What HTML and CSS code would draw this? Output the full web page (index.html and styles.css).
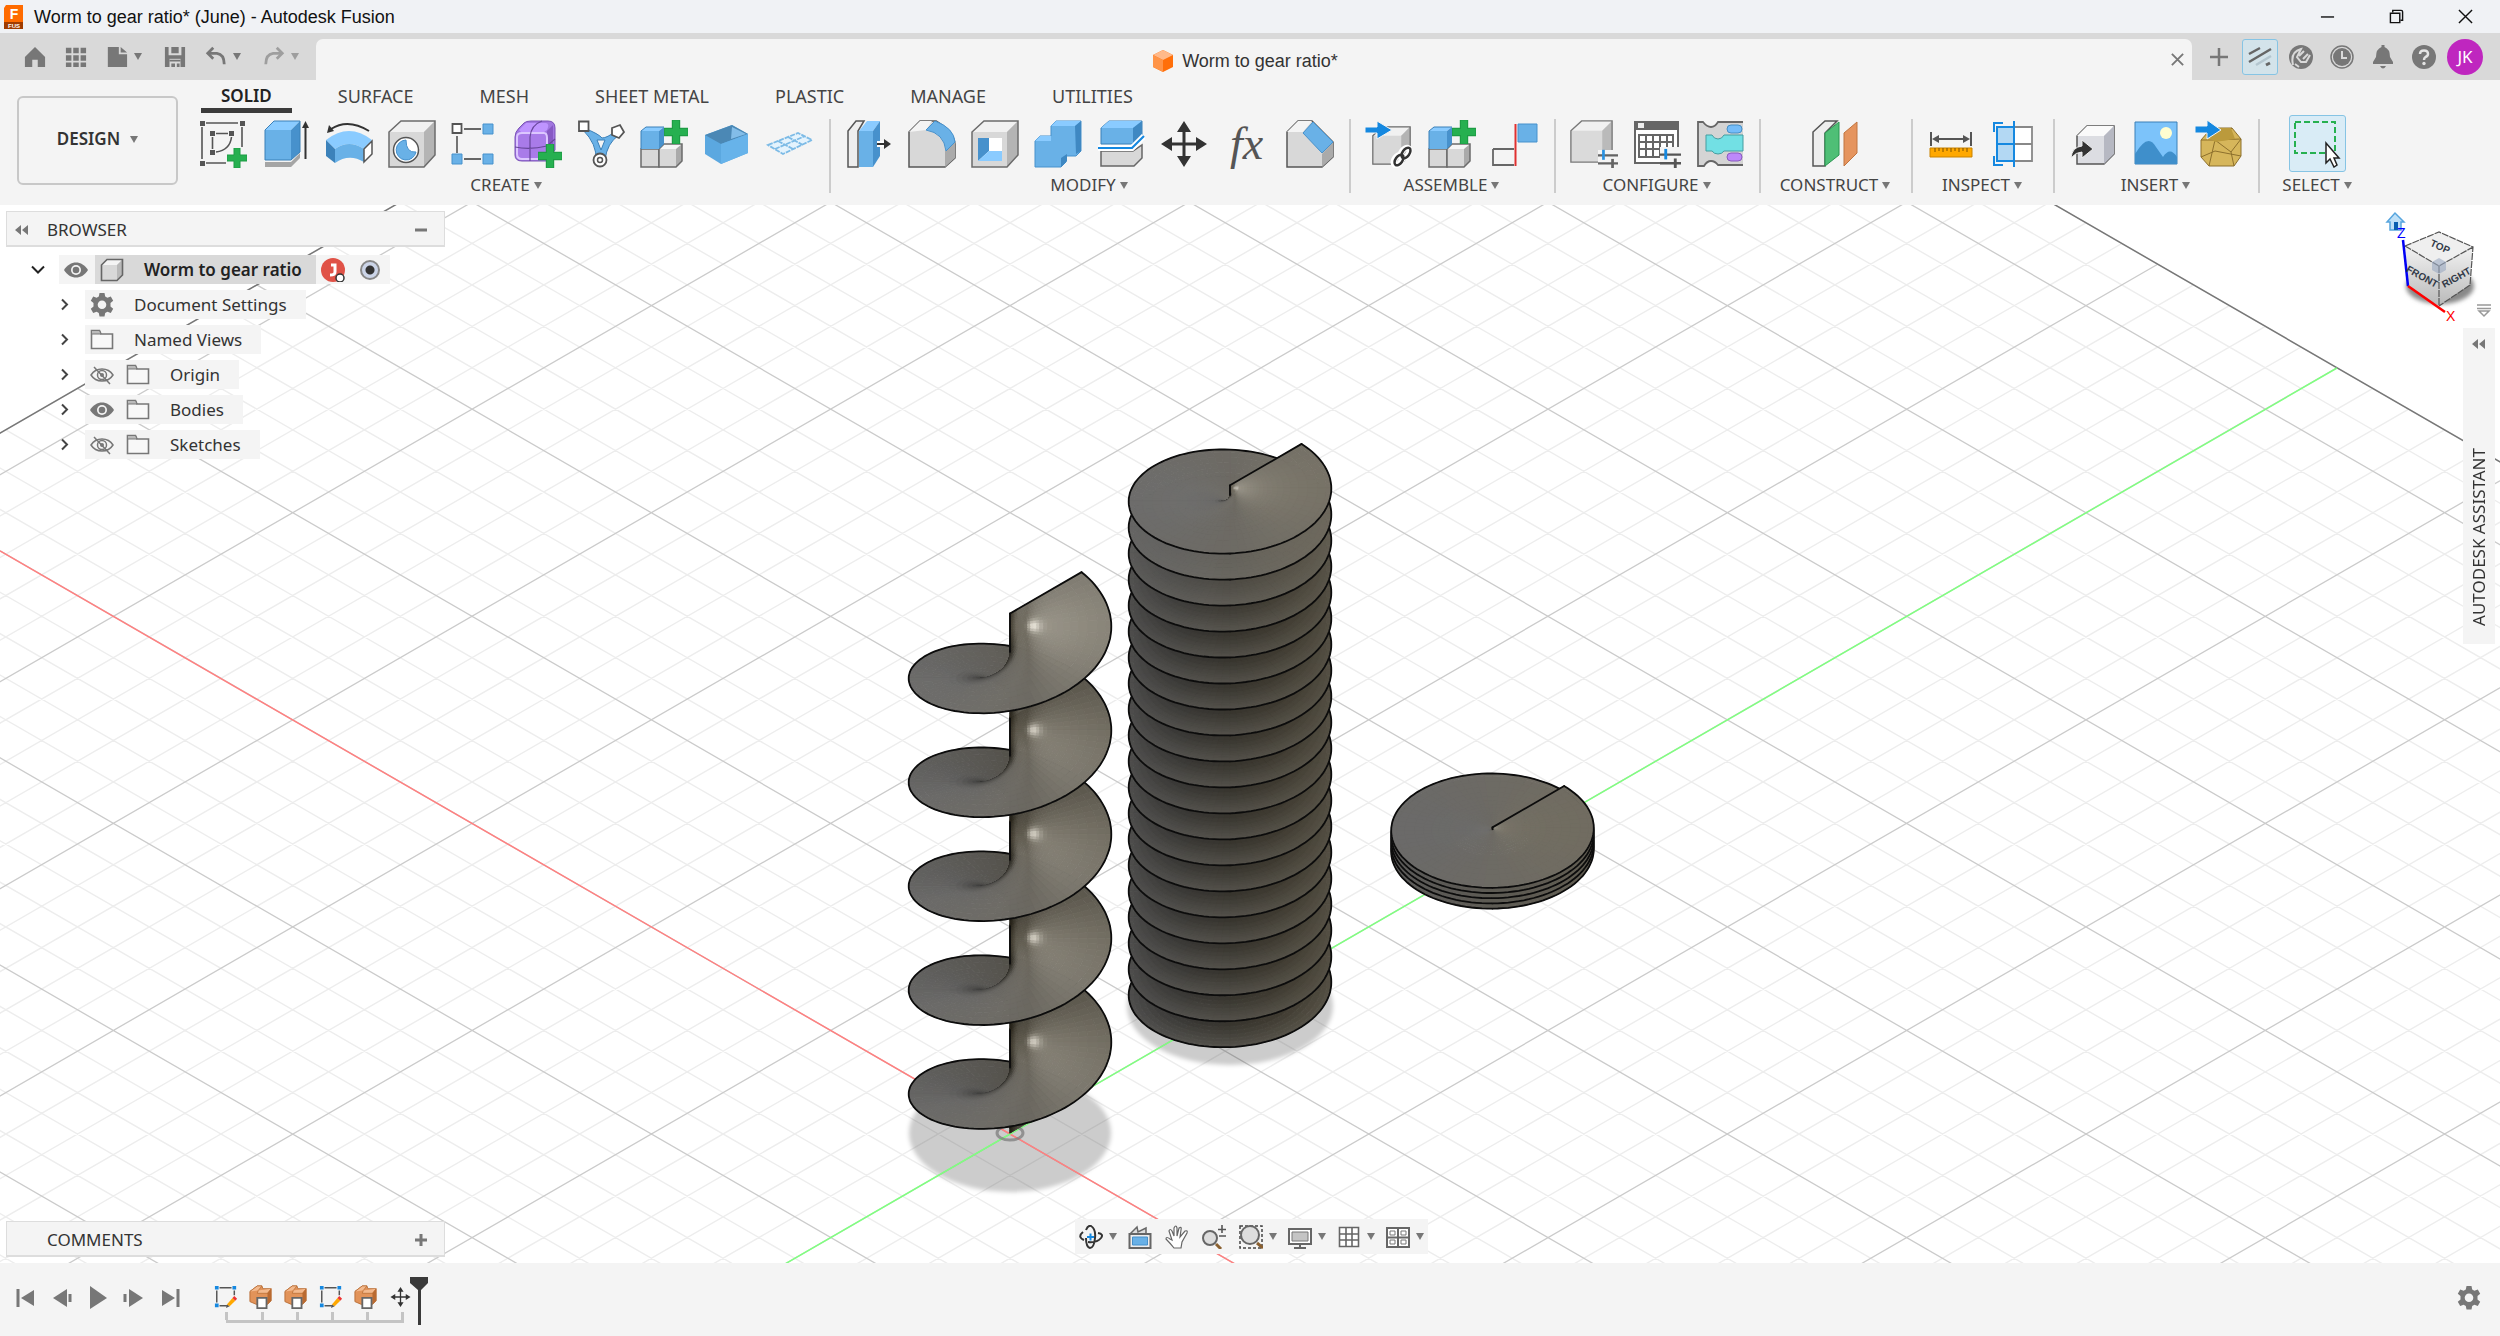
FILE: index.html
```html
<!DOCTYPE html>
<html lang="en">
<head>
<meta charset="utf-8">
<title>Worm to gear ratio* (June) - Autodesk Fusion</title>
<link rel="stylesheet" href="styles.css">
</head>
<body>
<svg class="defs" aria-hidden="true">
  <defs>
    <linearGradient id="gCube" x1="0" y1="0" x2="0" y2="1"><stop offset="0" stop-color="#f2f2f2"/><stop offset="1" stop-color="#b9b9b9"/></linearGradient>
    <symbol id="plus" viewBox="0 0 20 20"><path d="M7 0h6v7h7v6h-7v7h-6v-7h-7v-6h7z" fill="#26b050" stroke="#1d9c44"/></symbol>
    <symbol id="box" viewBox="0 0 48 48"><path d="M1 12 13 1H47V35L36 47H1z" fill="#d8d8d8"/><path d="M1 12 13 1H47L36 12z" fill="#f1f1f1"/><path d="M36 12 47 1V35L36 47z" fill="#b4b4b4"/><path d="M1 12 13 1H47V35L36 47H1z" fill="none" stroke="#6b6b6b" stroke-width="1.5"/></symbol>
    <symbol id="smallBox" viewBox="0 0 24 24"><path d="M1.500 7 7 1.500H22.500V17L17 22.500H1.500z" fill="#d8d8d8"/><path d="M1.500 7 7 1.500H22.500L17 7z" fill="#f4f4f4"/><path d="M17 7 22.500 1.500V17L17 22.500z" fill="#b9b9b9"/><path d="M1.500 7 7 1.500H22.500V17L17 22.500H1.500z" fill="none" stroke="#666" stroke-width="1.600"/></symbol>
    <symbol id="eye" viewBox="0 0 24 24"><path d="M0 12C6 2 18 2 24 12 18 22 6 22 0 12z" fill="#777"/><circle cx="12" cy="12" r="5" fill="#f4f4f4"/><circle cx="12" cy="12" r="3.300" fill="#777"/></symbol>
    <symbol id="eyeOff" viewBox="0 0 24 24"><path d="M1 12C6 4 18 4 23 12 18 20 6 20 1 12zM4 4 20 21" fill="none" stroke="#777" stroke-width="1.500"/><circle cx="12" cy="12" r="4.500" fill="none" stroke="#777" stroke-width="1.500"/><circle cx="12" cy="12" r="2" fill="#777"/></symbol>
    <symbol id="folder" viewBox="0 0 24 24"><path d="M1.500 20.500V2.500H9.500L11 6H22.500V20.500z" fill="#fff" fill-opacity=".4" stroke="#777" stroke-width="1.600"/><path d="M1.500 2.500H9.500L11 6H1.500z" fill="#bbb" stroke="#777"/></symbol>
    <symbol id="gear" viewBox="0 0 24 24"><path fill-rule="evenodd" d="M9.500 0h5l.7 3.500 2.200 1.200 3.400-1.200 2.400 4.200-2.700 2.300v3.500l2.700 2.300-2.400 4.200-3.400-1.200-2.200 1.200-.7 3.500h-5l-.7-3.500-2.200-1.200-3.400 1.200L.8 15.800l2.700-2.300V10L.8 7.700l2.400-4.200 3.400 1.200 2.200-1.200zM12 7.500a4.300 4.300 0 1 0 0 8.600 4.300 4.300 0 0 0 0-8.600z" fill="#777"/></symbol>
    <symbol id="chev" viewBox="0 0 16 16"><path d="M5 3 10 8 5 13" fill="none" stroke="#444" stroke-width="2"/></symbol>
    <symbol id="tlSketch" viewBox="0 0 26 26"><path d="M6 3H19M3 6V19M6 22.500H14M22 6V11" fill="none" stroke="#555" stroke-width="1.600"/><path d="M1 1h4v4H1zM20 1h4v4h-4zM1 20h4v4H1z" fill="#1588e0"/><path d="M14 21 20 14 23 17 17 23z" fill="#ffa800"/><path d="M20 14 22 12 25 15 23 17z" fill="#e33"/><path d="M14 21 17 23 13 25z" fill="#555"/></symbol>
    <symbol id="tlBody" viewBox="0 0 26 26"><path d="M1 7 9 1H14L15 4 24 4V17L20 21H8L1 18z" fill="#e29359" stroke="#b86c34"/><path d="M1 7 9 1H14L10 6 9 9 20 9 24 4" fill="#f3b98d" stroke="#b86c34" stroke-width=".8"/><path d="M20 9 24 4V17L20 21z" fill="#b96a31"/><path d="M9 14H19V25H9z" fill="#fff" stroke="#666" stroke-width="2"/></symbol>
    <symbol id="move" viewBox="0 0 48 48"><path d="M24 1 31 12H25.500V22.500H36V17L47 24 36 31V25.500H25.500V36H31L24 47 17 36H22.500V25.500H12V31L1 24 12 17V22.500H22.500V12H17z" fill="#333"/></symbol>
    <symbol id="newComp" viewBox="0 0 48 48"><path d="M1 29 H19V47H1z" fill="#d8d8d8" stroke="#6b6b6b" stroke-width="1.500"/><path d="M19 29 24 24H42L36 29z" fill="#f6f6f6"/><path d="M19 29H36V47H19z" fill="#d8d8d8"/><path d="M36 29 42 24V41L36 47z" fill="#aaa"/><path d="M19 29 24 24H42V41L36 47H19z" fill="none" stroke="#6b6b6b" stroke-width="1.500"/><path d="M1 11H19V29H1z" fill="#69b1e7"/><path d="M1 11 6 7H24L19 11z" fill="#8acbff"/><path d="M19 11 24 7V24L19 29z" fill="#4791cc"/><path d="M1 29V11L6 7H24" fill="none" stroke="#3a80b8"/><use href="#plus" x="24" y="0" width="24" height="24"/></symbol>
    <symbol id="sliders" viewBox="0 0 22 22"><path d="M0 8H22M0 17H22" stroke="#555" stroke-width="2.500"/><path d="M6 2V13" stroke="#1588e0" stroke-width="3"/><path d="M16 12V22" stroke="#555" stroke-width="3"/></symbol>
  </defs>
</svg>

<header class="titlebar">
  <svg class="app-logo" viewBox="0 0 22 26"><path d="M3 1H20V20H1V4z" fill="#ff6b00"/><path d="M1 18H20V25H1z" fill="#a03c00"/><text x="11" y="15" text-anchor="middle" class="logo-f">F</text><text x="11" y="24" text-anchor="middle" class="logo-s">FUS</text></svg>
  <h1 class="app-title">Worm to gear ratio* (June) - Autodesk Fusion</h1>
  <div class="window-buttons">
    <button aria-label="Minimize"><svg viewBox="0 0 16 16"><path d="M1 8.500H15" stroke="#111" stroke-width="1.500"/></svg></button>
    <button aria-label="Restore"><svg viewBox="0 0 16 16"><path d="M4 3.500V1.500H13Q14.500 1.500 14.500 3V12H12.500M1.500 4.500H11.500V14.500H1.500z" fill="none" stroke="#111" stroke-width="1.500"/></svg></button>
    <button aria-label="Close"><svg viewBox="0 0 16 16"><path d="M1 1 15 15M15 1 1 15" stroke="#111" stroke-width="1.500"/></svg></button>
  </div>
</header>

<div class="tabbar">
  <nav class="quick" aria-label="Quick access">
    <button aria-label="Home"><svg viewBox="0 0 24 24"><path d="M12 1 23 12V23H15V15H9V23H1V12z" fill="#777"/></svg></button>
    <button aria-label="Data panel"><svg viewBox="0 0 24 24"><path d="M1 2h6v6H1zM9 2h6v6H9zM17 2h6v6h-6zM1 10h6v6H1zM9 10h6v6H9zM17 10h6v6h-6zM1 18h6v5H1zM9 18h6v5H9zM17 18h6v5h-6z" fill="#777"/></svg></button>
    <button class="with-arrow" aria-label="File"><svg viewBox="0 0 24 24"><path d="M2 1H14V9H23V23H2zM16 1 23 7H16z" fill="#777"/></svg><i class="arrow"></i></button>
    <button aria-label="Save"><svg viewBox="0 0 24 24"><path d="M1 1H5V10H19V1H23V23H1zM8 1H16V8H8z" fill="#777"/><path d="M6 14H18V23H6z" fill="#d9d9d9"/><path d="M6 15H18V17H6zM8 19H12V23H8zM14 19H17V23H14z" fill="#777"/></svg></button>
    <button class="with-arrow" aria-label="Undo"><svg viewBox="0 0 24 24"><path d="M3 8H13Q21 9 21 20" fill="none" stroke="#777" stroke-width="3"/><path d="M9 2 3 8 9 14" fill="none" stroke="#777" stroke-width="3"/></svg><i class="arrow"></i></button>
    <button class="with-arrow faded" aria-label="Redo"><svg viewBox="0 0 24 24"><path d="M21 8H11Q3 9 3 20" fill="none" stroke="#777" stroke-width="3"/><path d="M15 2 21 8 15 14" fill="none" stroke="#777" stroke-width="3"/></svg><i class="arrow"></i></button>
  </nav>
  <div class="doc-tab">
    <div class="doc-name"><svg viewBox="0 0 22 24"><path d="M11 1 21 6V18L11 23 1 18V6z" fill="#ff6f0a"/><path d="M11 1 21 6 11 11 1 6z" fill="#ffb98a"/><path d="M1 6 11 11V23L1 18z" fill="#ff9447"/></svg><span>Worm to gear ratio*</span></div>
    <button class="tab-close" aria-label="Close tab"><svg viewBox="0 0 16 16"><path d="M2 2 14 14M14 2 2 14" stroke="#777" stroke-width="2"/></svg></button>
  </div>
  <div class="account">
    <button aria-label="New tab"><svg viewBox="0 0 24 24"><path d="M12 3V21M3 12H21" stroke="#777" stroke-width="2.500"/></svg></button>
    <button class="lit" aria-label="Assistant"><svg viewBox="0 0 24 24"><path d="M1 9 12 3M1 17 23 4" stroke="#666" stroke-width="2.500"/><path d="M8 20 23 11" stroke="#b4c6cf" stroke-width="2.500"/><path d="M18 20 22 18" stroke="#666" stroke-width="3"/></svg></button>
    <button aria-label="Extensions"><svg viewBox="0 0 24 24"><circle cx="12" cy="12" r="12" fill="#777"/><path d="M4 20Q1 7 12 4L8 12 12 17 17 17 21 10M10 11 15 6M14 14 19 9M6 19 10 22" fill="none" stroke="#d9d9d9" stroke-width="2"/></svg></button>
    <button aria-label="Job status"><svg viewBox="0 0 24 24"><circle cx="12" cy="12" r="11" fill="none" stroke="#777" stroke-width="1.500"/><circle cx="12" cy="12" r="9" fill="#777"/><path d="M12 6V13H17" fill="none" stroke="#d9d9d9" stroke-width="2"/></svg></button>
    <button aria-label="Notifications"><svg viewBox="0 0 24 24"><path d="M10.500 0H13.500V2Q19 4 19 12L22 17V19H2V17L5 12Q5 4 10.500 2zM9 21H15Q12 26 9 21z" fill="#777"/></svg></button>
    <button aria-label="Help"><svg viewBox="0 0 24 24"><circle cx="12" cy="12" r="12" fill="#777"/><path d="M8 9Q8 5.500 12 5.500T16 9Q16 11 13.500 12 12 13 12 15" fill="none" stroke="#e4e4e4" stroke-width="2.500"/><circle cx="12" cy="18.500" r="1.700" fill="#e4e4e4"/></svg></button>
    <button class="avatar" aria-label="Account">JK</button>
  </div>
</div>

<section class="ribbon">
  <button class="workspace">DESIGN <i class="arrow"></i></button>
  <div class="ribbon-main">
    <nav class="modes">
      <a href="#solid" class="on">SOLID</a><a href="#surface">SURFACE</a><a href="#mesh">MESH</a><a href="#sheet">SHEET METAL</a><a href="#plastic">PLASTIC</a><a href="#manage">MANAGE</a><a href="#utilities">UTILITIES</a>
    </nav>
    <div class="groups">
      <div class="group first">
        <div class="tools">
          <button aria-label="Create sketch"><svg viewBox="0 0 48 48"><path d="M7 3H39M3 7V39M43 7V27M7 43H27M17 13.500H29M13.500 17V29M17 32Q31 30 32.500 17" fill="none" stroke="#555" stroke-width="1.600"/><path d="M1 1h5v5H1zM41 1h5v5h-5zM1 41h5v5H1zM11 11h5v5h-5zM30 11h5v5h-5zM11 30h5v5h-5z" fill="#555"/><use href="#plus" x="28" y="28" width="20" height="20"/></svg></button>
          <button aria-label="Extrude"><svg viewBox="0 0 48 48"><path d="M3 42 H29L38 33V38L29 47H3z" fill="#a5a5a5"/><path d="M3 10H29V40H3z" fill="#69b1e7"/><path d="M3 10 12 1H38L29 10z" fill="#8acbff"/><path d="M29 10 38 1V32L29 40z" fill="#4791cc"/><path d="M3 40V10L12 1H38V32L29 40z" fill="none" stroke="#3a80b8"/><path d="M43.500 39V5" stroke="#333" stroke-width="2"/><path d="M40 8 43.500 1 47 8z" fill="#333"/></svg></button>
          <button aria-label="Revolve"><svg viewBox="0 0 48 48"><path d="M1 20Q24 2 47 20L39 29Q24 19 10 29z" fill="#8acbff"/><path d="M1 20 10 29V43L1 36z" fill="#3c82ba"/><path d="M10 29Q24 19 39 29V42Q24 33 10 43z" fill="#69b1e7"/><path d="M39 29 47 21V34L39 42z" fill="#fff" stroke="#555" stroke-width="1.500"/><path d="M6 9Q23-2 44 11" fill="none" stroke="#333" stroke-width="2"/><path d="M2 13 4 5 9 11z" fill="#333"/></svg></button>
          <button aria-label="Hole"><svg viewBox="0 0 48 48"><use href="#box"/><circle cx="18" cy="30" r="12.500" fill="#fff" stroke="#555" stroke-width="1.500"/><path d="M18 20A10 10 0 1 0 28 32Q18 33 18 20z" fill="#69b1e7" stroke="#4791cc"/></svg></button>
          <button aria-label="Pattern"><svg viewBox="0 0 48 48"><path d="M1.500 4H10.500V13H1.500z" fill="#fff" stroke="#555" stroke-width="1.800"/><path d="M13 9H30M6 16V33M13 39H30" stroke="#666" stroke-width="1.800"/><path d="M32 4h10v10H32zM1 34h10v10H1zM32 34h10v10H32z" fill="#69b1e7" stroke="#4791cc"/></svg></button>
          <button aria-label="Create form"><svg viewBox="0 0 48 48"><path d="M1 17Q1 12 5 8L10 3Q12 1 17 1H34Q41 1 41 8V30L33 41H8Q1 41 1 35z" fill="#a177e0" stroke="#7a52b8"/><path d="M5 10 12 3H32Q36 4 33 10Q30 13 26 13H8z" fill="#bf94ff"/><path d="M33 11 39 5V28L33 34z" fill="#8759c4"/><path d="M3 17Q3 13 8 13H30Q33 13 33 18V34Q33 39 28 39H8Q3 39 3 34z" fill="#a97be9" stroke="#dcc6ff" stroke-width="2"/><path d="M16 41V17Q17 5 28 1M1 27Q16 30 33 26L41 19" fill="none" stroke="#674699" stroke-width="1.200"/><use href="#plus" x="24" y="24" width="24" height="24"/></svg></button>
          <button aria-label="Configure structure"><svg viewBox="0 0 48 48"><path d="M7 8 Q22 14 25 18Q30 18 39 11L42 15Q30 23 28 40H19Q20 24 6 10z" fill="#69b1e7" stroke="#3a80b8"/><path d="M20 20H28L24 30z" fill="#f4f4f4" stroke="#3a80b8"/><path d="M2 1.500H11.500V11H2z" fill="#fff" stroke="#555" stroke-width="1.800"/><path d="M35 8 43 5 47 12 42 18 35 15z" fill="#fff" stroke="#555" stroke-width="1.800"/><circle cx="23" cy="40" r="6.500" fill="#fff" stroke="#555" stroke-width="1.800"/><circle cx="23" cy="40" r="2.500" fill="none" stroke="#555" stroke-width="1.500"/></svg></button>
          <button aria-label="New component"><svg viewBox="0 0 48 48"><use href="#newComp"/></svg></button>
          <button aria-label="Volume"><svg viewBox="0 0 48 48"><path d="M2 15 29 5 45 14V33L18 44 2 34z" fill="#5ba8e0"/><path d="M2 15 29 5 45 14 18 24z" fill="#4b88b5"/><path d="M29 7 43 14 28 19z" fill="#83bde8"/><path d="M18 24 45 14V33L18 44z" fill="#67b3ea"/></svg></button>
          <button aria-label="Grid"><svg viewBox="0 0 48 48"><path d="M2 25 32 13 46 20 17 34zM12 21 27 29M22 17 37 25M9 29 39 16" fill="#e4f3fd" stroke="#7dbbe6" stroke-width="1.800" stroke-dasharray="5 1"/></svg></button>
        </div>
        <button class="group-label">CREATE <i class="arrow"></i></button>
      </div>
      <div class="group">
        <div class="tools">
          <button aria-label="Press pull"><svg viewBox="0 0 48 48"><path d="M3 11 11 1H19L13 11V47H3z" fill="#eee" stroke="#555" stroke-width="1.500"/><path d="M14 11H28V47H14z" fill="#69b1e7"/><path d="M14 11 22 1H35L28 11z" fill="#8acbff"/><path d="M28 11 35 1V36L28 47z" fill="#4791cc"/><path d="M32 24H40" stroke="#fff" stroke-width="6"/><path d="M32 24H41" stroke="#333" stroke-width="2"/><path d="M39 19 46 24 39 29z" fill="#333"/></svg></button>
          <button aria-label="Fillet"><svg viewBox="0 0 48 48"><path d="M1 12 12 1H28Q46 12 47 24V38L37 47H1z" fill="#d8d8d8" stroke="#555" stroke-width="1.500"/><path d="M1 12 12 1H24L18 10z" fill="#f4f4f4"/><path d="M37 31 47 22V38L37 47z" fill="#aaa"/><path d="M18 10 27 1Q46 8 47 22L38 31Q36 13 18 10z" fill="#69b1e7" stroke="#4791cc"/></svg></button>
          <button aria-label="Shell"><svg viewBox="0 0 48 48"><use href="#box"/><path d="M7 18H31V41H7z" fill="#fff"/><path d="M7 18H18V31L7 41z" fill="#4791cc"/><path d="M7 41 18 31H31V41z" fill="#8acbff"/></svg></button>
          <button aria-label="Combine"><svg viewBox="0 0 48 48"><path d="M1 21 6 16H17V6L22 1H47V31L42 36H32V42L27 47H1z" fill="#69b1e7" stroke="#4791cc"/><path d="M17 6 22 1H47L41 6zM1 21 6 16H17V21z" fill="#8acbff"/><path d="M41 6 47 1V31L42 34zM27 38 33 34V41L27 47z" fill="#3f88c2"/></svg></button>
          <button aria-label="Split body"><svg viewBox="0 0 48 48"><path d="M4 8 12 1H45V16L35 24H4z" fill="#69b1e7" stroke="#3a80b8"/><path d="M4 8 12 1H45L36 8z" fill="#8acbff"/><path d="M36 8 45 1V16L36 24z" fill="#3f88c2"/><path d="M4 31H36L45 25V38L37 46H4z" fill="#d8d8d8" stroke="#666" stroke-width="1.500"/><path d="M1 28H35L47 16" fill="none" stroke="#fff" stroke-width="6"/><path d="M1 28H35L47 16" fill="none" stroke="#1588e0" stroke-width="2.200"/></svg></button>
          <button aria-label="Move"><svg viewBox="0 0 48 48"><use href="#move"/></svg></button>
          <button class="fx" aria-label="Parameters">fx</button>
          <button aria-label="Chamfer"><svg viewBox="0 0 48 48"><path d="M1 12 12 1H26L47 22V37L36 47H1z" fill="#d8d8d8" stroke="#555" stroke-width="1.500"/><path d="M1 12 12 1H26L17 12z" fill="#f4f4f4"/><path d="M36 34 47 22V37L36 47z" fill="#aaa"/><path d="M17 13 27 2 47 22 36 33z" fill="#69b1e7" stroke="#4791cc"/></svg></button>
        </div>
        <button class="group-label">MODIFY <i class="arrow"></i></button>
      </div>
      <div class="group">
        <div class="tools">
          <button aria-label="Insert component"><svg viewBox="0 0 48 48"><use href="#box" x="7" y="6" width="39" height="39"/><path d="M0 7H12V1L27 10 12 19V13H0z" fill="#1588e0" stroke="#f4f4f4"/><g fill="none" stroke="#fff" stroke-width="6"><ellipse cx="40" cy="33" rx="3.500" ry="6" transform="rotate(35 40 33)"/><ellipse cx="33" cy="40" rx="3.500" ry="6" transform="rotate(35 33 40)"/></g><g fill="none" stroke="#333" stroke-width="2.500"><ellipse cx="41" cy="33" rx="3.500" ry="6" transform="rotate(35 41 33)"/><ellipse cx="34" cy="40" rx="3.500" ry="6" transform="rotate(35 34 40)"/></g></svg></button>
          <button aria-label="New component"><svg viewBox="0 0 48 48"><use href="#newComp"/></svg></button>
          <button aria-label="Joint"><svg viewBox="0 0 48 48"><path d="M2 29H23M2 29V45H23" fill="#f4f4f4" stroke="#666" stroke-width="1.800"/><path d="M27 4H46V22H27z" fill="#69b1e7" stroke="#4791cc"/><path d="M24.500 4V46" stroke="#e03030" stroke-width="2"/></svg></button>
        </div>
        <button class="group-label">ASSEMBLE <i class="arrow"></i></button>
      </div>
      <div class="group">
        <div class="tools">
          <button aria-label="Configure"><svg viewBox="0 0 48 48" opacity=".9"><use href="#box" width="43" height="43"/><path d="M28 30H48V48H28z" fill="#f4f4f4"/><use href="#sliders" x="28" y="28" width="20" height="20"/></svg></button>
          <button aria-label="Configuration table"><svg viewBox="0 0 48 48"><path d="M2 2H45V43H2z" fill="#fff" stroke="#666" stroke-width="2"/><path d="M2 1H46V10H2z" fill="#666"/><path d="M5 3h6v5H5z" fill="#eee"/><path d="M6 15H40V37H6zM13 15V37M20 15V37M27 15V37M34 15V37M6 22H40M6 29H40" fill="none" stroke="#666" stroke-width="2"/><path d="M27 27H48V48H27z" fill="#f4f4f4"/><use href="#sliders" x="27" y="27" width="21" height="21"/></svg></button>
          <button aria-label="Configuration rules"><svg viewBox="0 0 48 48"><path d="M2 2H7Q10 7 15 7T22 2H47V45H22Q19 41 15 41T8 46H2z" fill="#d4d4d4"/><path d="M47 2H22Q19 7 15 7T7 2H2V46H8Q11 41 15 41T22 45H47" fill="none" stroke="#666" stroke-width="1.800"/><path d="M10 15H16Q18 19 22 19T28 15H47V31H28Q26 34 22 34T16 31H10z" fill="#72e0e4" stroke="#459da0"/><rect x="31" y="5" width="15" height="8" rx="4" fill="#74bdfa" stroke="#468fc4"/><rect x="31" y="33" width="15" height="8" rx="4" fill="#bd88fa" stroke="#895bc0"/></svg></button>
        </div>
        <button class="group-label">CONFIGURE <i class="arrow"></i></button>
      </div>
      <div class="group wide">
        <div class="tools">
          <button aria-label="Plane"><svg viewBox="0 0 48 48"><path d="M2 12 14 1H26L14 13V46H2z" fill="#eee" stroke="#555" stroke-width="1.500"/><path d="M14 13 28 2V35L14 46z" fill="#4fbf76" stroke="#299650"/><path d="M33 13 46 2V33L33 46z" fill="#e5945e" stroke="#c07440"/></svg></button>
        </div>
        <button class="group-label">CONSTRUCT <i class="arrow"></i></button>
      </div>
      <div class="group">
        <div class="tools">
          <button aria-label="Measure"><svg viewBox="0 0 48 48"><path d="M4 12V26M44 12V26M7 19H41" stroke="#555" stroke-width="2"/><path d="M5 19 12 15V23zM43 19 36 15V23z" fill="#555"/><path d="M3 28H45V37H3z" fill="#ffa800" stroke="#c98300"/><path d="M8 28V32M12 28V31M16 28V32M20 28V31M24 28V32M28 28V31M32 28V32M36 28V31M40 28V32" stroke="#7c5100"/></svg></button>
          <button aria-label="Section analysis"><svg viewBox="0 0 48 48"><path d="M7 7H24V41H7z" fill="#b3d8f3" stroke="#1588e0" stroke-width="2"/><path d="M24 7H42V41H24M24 24H42" fill="#fff" stroke="#888" stroke-width="1.800"/><path d="M7 24H24M24 1V47M13 3H4V12M13 45H4V36" fill="none" stroke="#1588e0" stroke-width="2"/></svg></button>
        </div>
        <button class="group-label">INSPECT <i class="arrow"></i></button>
      </div>
      <div class="group">
        <div class="tools">
          <button aria-label="Insert derive"><svg viewBox="0 0 48 48"><path d="M8 16 18 6H45V34L35 44H8z" fill="#dcdde2" stroke="#555" stroke-width="1.500"/><path d="M8 16 18 6H45L35 16z" fill="#fafafa"/><path d="M35 16 45 6V34L35 44z" fill="#b6b8c2"/><path d="M2 38Q3 27 13 26V20L24 29 13 38V32Q7 32 2 38z" fill="#333" stroke="#eee"/></svg></button>
          <button aria-label="Insert image"><svg viewBox="0 0 48 48"><path d="M3 2H45V44H3z" fill="#7cc3fa" stroke="#3a80b8"/><circle cx="34" cy="13" r="6" fill="#fffed0"/><path d="M3 34Q16 12 24 27L31 37Q38 26 45 37V44H3z" fill="#3f8fcb"/></svg></button>
          <button aria-label="Insert mesh"><svg viewBox="0 0 48 48"><path d="M6 20 13 12 22 8H37L46 19V36L39 46H14L6 37z" fill="#d6b65b" stroke="#8d702c"/><path d="M6 20H20L46 19M20 20 14 46M20 20 36 32 46 19M36 32 39 46M6 37 20 31 46 36M22 8 20 20 37 8" fill="none" stroke="#8d702c"/><path d="M10 15 22 8H36L40 19 20 22z" fill="#bb9a3c"/><path d="M0 6H12V0L26 10 12 19V13H0z" fill="#1588e0" stroke="#f4f4f4"/></svg></button>
        </div>
        <button class="group-label">INSERT <i class="arrow"></i></button>
      </div>
      <div class="group narrow">
        <div class="tools">
          <button class="lit" aria-label="Select"><svg viewBox="0 0 48 48"><path d="M2 2H42V33H2z" fill="none" stroke="#26b050" stroke-width="2" stroke-dasharray="6 3"/><path d="M33 23V43L37 39 41 47 44 45 41 38 46 38z" fill="#fff" stroke="#222" stroke-width="1.500"/></svg></button>
        </div>
        <button class="group-label">SELECT <i class="arrow"></i></button>
      </div>
    </div>
  </div>
</section>

<main class="viewport">
  <svg class="scene" viewBox="0 205 2500 1058" preserveAspectRatio="xMidYMid slice">
    <defs><filter id="soft"><feGaussianBlur stdDeviation="2"/></filter></defs>
    <g id="grid" fill="none"></g>
    <g fill="#000" fill-opacity=".2" filter="url(#soft)"><ellipse cx="1010" cy="1133" rx="101" ry="59"/><ellipse cx="1230" cy="1006" rx="103" ry="59"/></g>
    <path d="M0 551 1010 1134 1235 1264" fill="none" stroke="#ff8080" stroke-width="1.500"/>
    <path d="M785 1264 1010 1134 2337 368" fill="none" stroke="#80ff80" stroke-width="1.500"/>
    <ellipse cx="1010" cy="1133" rx="13" ry="7" fill="none" stroke="#777" stroke-opacity=".7" stroke-width="3"/>
    <g id="bodies" stroke-linecap="round"></g>
  </svg>

  <aside class="side">
    <section>
      <header class="panel-head"><button aria-label="Collapse"><svg viewBox="0 0 16 16"><path d="M7 3V13L1 8zM14 3V13L8 8z" fill="#777"/></svg></button><h2>BROWSER</h2><button aria-label="Minimize browser"><svg viewBox="0 0 16 16"><path d="M2 8H14" stroke="#777" stroke-width="3"/></svg></button></header>
      <ul class="tree">
        <li class="root"><svg class="twist" viewBox="0 0 16 16"><path d="M2 5 8 11 14 5" fill="none" stroke="#222" stroke-width="2"/></svg><span class="cell watch"><svg><use href="#eye"/></svg></span><span class="cell chosen"><svg><use href="#smallBox"/></svg><b>Worm to gear ratio</b></span><span class="cell badges"><svg viewBox="0 0 24 24"><circle cx="12" cy="12" r="12" fill="#e05247"/><path d="M10 7H14V14Q14 17 9 17" fill="none" stroke="#fff" stroke-width="3"/><circle cx="19" cy="20" r="4" fill="#fff" stroke="#333" stroke-width="1.500"/></svg><input type="radio" checked aria-label="Activate component"></span></li>
        <li><svg class="twist"><use href="#chev"/></svg><span class="cell"><svg><use href="#gear"/></svg><span>Document Settings</span></span></li>
        <li><svg class="twist"><use href="#chev"/></svg><span class="cell"><svg><use href="#folder"/></svg><span>Named Views</span></span></li>
        <li><svg class="twist"><use href="#chev"/></svg><span class="cell"><svg><use href="#eyeOff"/></svg><svg><use href="#folder"/></svg><span>Origin</span></span></li>
        <li><svg class="twist"><use href="#chev"/></svg><span class="cell"><svg><use href="#eye"/></svg><svg><use href="#folder"/></svg><span>Bodies</span></span></li>
        <li><svg class="twist"><use href="#chev"/></svg><span class="cell"><svg><use href="#eyeOff"/></svg><svg><use href="#folder"/></svg><span>Sketches</span></span></li>
      </ul>
    </section>
    <section>
      <header class="panel-head"><span class="blank"></span><h2>COMMENTS</h2><button aria-label="Add comment"><svg viewBox="0 0 16 16"><path d="M2 8H14M8 2V14" stroke="#777" stroke-width="3"/></svg></button></header>
    </section>
  </aside>

  <div class="navbar">
    <button aria-label="Orbit"><svg viewBox="0 0 24 24"><path d="M7 5Q9 0 12 1 17 4 16 13 15 23 11 23 7 22 7 13M4 7Q-2 12 5 15M9 17Q18 18 22 13 25 9 19 8" fill="none" stroke="#333" stroke-width="2"/><path d="M8 12H15M11.500 8.500V15.500" stroke="#1588e0" stroke-width="2"/></svg></button><i class="arrow"></i>
    <button aria-label="Look at"><svg viewBox="0 0 24 24"><path d="M2 9 9 2 10 7 18 3V9" fill="#ddd" stroke="#666" stroke-width="1.500"/><path d="M1.500 9H22.500V23H1.500z" fill="#eee" stroke="#666" stroke-width="2"/><path d="M4.500 12H19.500V20H4.500z" fill="#69b1e7" stroke="#4791cc"/></svg></button>
    <button aria-label="Pan"><svg viewBox="0 0 24 24"><path d="M9 23Q5 18 1 14 1 11 5 14L7 15 4 6Q5 3 7 6L9 11V3Q11-1 12 3V11L14 3Q17 1 16 5L15 12 20 6Q23 5 22 8L17 17 16 23z" fill="#fff" stroke="#666" stroke-width="1.200"/></svg></button>
    <button aria-label="Zoom"><svg viewBox="0 0 24 24"><circle cx="8" cy="13" r="7" fill="#ddd" stroke="#666" stroke-width="2"/><path d="M14 19 19 24" stroke="#8a6030" stroke-width="3"/><path d="M16 4.500H24M20 0V8M17 11H24" stroke="#555" stroke-width="1.600"/></svg></button>
    <button aria-label="Fit"><svg viewBox="0 0 24 24"><path d="M1 1H23V23H1z" fill="none" stroke="#444" stroke-width="1.500" stroke-dasharray="3 2"/><circle cx="11" cy="10" r="9" fill="#ddd" stroke="#666" stroke-width="2"/><path d="M18 18 24 23" stroke="#8a6030" stroke-width="3"/></svg></button><i class="arrow"></i>
    <button aria-label="Display settings"><svg viewBox="0 0 24 24"><path d="M1 4H23V19H1z" fill="#fff" stroke="#666" stroke-width="2"/><path d="M4 7H20V16H4z" fill="#c4c4c4" stroke="#777"/><path d="M12 19V22M6 23H18" stroke="#666" stroke-width="2"/></svg></button><i class="arrow"></i>
    <button aria-label="Grid settings"><svg viewBox="0 0 24 24"><path d="M2.500 2.500H21.500V21.500H2.500zM9 2.500V21.500M15 2.500V21.500M2.500 9H21.500M2.500 15H21.500" fill="#fff" stroke="#666" stroke-width="1.600"/></svg></button><i class="arrow"></i>
    <button aria-label="Viewports"><svg viewBox="0 0 24 24"><path d="M1 3H23V22H1zM12 3V22M1 12.500H23" fill="#fff" stroke="#666" stroke-width="2"/><path d="M4 6H9V10H4zM15 6H20V10H15zM4 15H9V19H4zM15 15H20V19H15z" fill="none" stroke="#777"/></svg></button><i class="arrow"></i>
  </div>

  <svg class="cube" viewBox="0 5 120 120">
    <g filter="url(#soft)"><ellipse cx="60" cy="86" rx="34" ry="18" fill="#888"/></g>
    <path d="M7 22 15 13 24 22H21V30H10V22z" fill="#bfe0f7" stroke="#57a5de" stroke-width="1.500"/><path d="M14 22H18V30H14z" fill="#0a5fb0"/>
    <path d="M25 46 59 66V106L28 86z" fill="url(#gCube)"/><path d="M59 66 93 47 90 85 59 106z" fill="url(#gCube)"/><path d="M25 46 59 32 93 47 59 66z" fill="#efefef"/>
    <path d="M25 46 59 32 93 47 90 85 59 106M25 46 59 66 93 47M59 66V106" fill="none" stroke="#555" stroke-width="1.200" stroke-dasharray="7 1"/>
    <path d="M52 62 59 58 66 62V70L59 74 52 70z" fill="#9aa9c2" fill-opacity=".6"/>
    <path d="M23 40 28 86" stroke="#0000f5" stroke-width="2.500"/><path d="M28 86 65 112" stroke="#f00" stroke-width="2.500"/>
    <text class="cube-text" x="60" y="50" text-anchor="middle" transform="rotate(24 60 47)">TOP</text>
    <text class="cube-text" x="42" y="80" text-anchor="middle" transform="rotate(29 42 77)">FRONT</text>
    <text class="cube-text" x="76" y="81" text-anchor="middle" transform="rotate(-29 76 77)">RIGHT</text>
    <text class="axis z" x="17" y="38">Z</text><text class="axis x" x="66" y="121">X</text>
  </svg>
  <svg class="cube-menu" viewBox="0 0 16 16"><path d="M1 2H15M1 5.500H15M3 8 8 13 13 8z" fill="none" stroke="#999" stroke-width="1.500"/></svg>
  <button class="assistant"><svg viewBox="0 0 16 16"><path d="M7 3V13L1 8zM14 3V13L8 8z" fill="#777"/></svg><span>AUTODESK ASSISTANT</span></button>
</main>

<footer class="timeline">
  <div class="playback">
    <button aria-label="To start"><svg viewBox="0 0 24 24"><path d="M4 3V21" stroke="#777" stroke-width="3"/><path d="M20 4V20L7 12z" fill="#777"/></svg></button>
    <button aria-label="Step back"><svg viewBox="0 0 24 24"><path d="M17 3V21L3 12z" fill="#777"/><path d="M20 8V16" stroke="#777" stroke-width="3"/></svg></button>
    <button aria-label="Play"><svg viewBox="0 0 24 24"><path d="M4 0V23L21 12z" fill="#777"/></svg></button>
    <button aria-label="Step forward"><svg viewBox="0 0 24 24"><path d="M7 3V21L21 12z" fill="#777"/><path d="M3 8V16" stroke="#777" stroke-width="3"/></svg></button>
    <button aria-label="To end"><svg viewBox="0 0 24 24"><path d="M20 3V21" stroke="#777" stroke-width="3"/><path d="M4 4V20L17 12z" fill="#777"/></svg></button>
  </div>
  <ol class="features">
    <li><svg><use href="#tlSketch"/></svg></li><li><svg><use href="#tlBody"/></svg></li><li><svg><use href="#tlBody"/></svg></li><li><svg><use href="#tlSketch"/></svg></li><li><svg><use href="#tlBody"/></svg></li><li><svg><use href="#move"/></svg></li>
  </ol>
  <svg class="marker" viewBox="0 0 18 48"><path d="M0 0H18V6L11 13V48H8V13L0 6z" fill="#3a3a3a"/></svg>
  <button class="settings" aria-label="Timeline settings"><svg><use href="#gear"/></svg></button>
</footer>
<script src="viewport.js"></script>
</body>
</html>
```
FILE: styles.css
```css
* { box-sizing: border-box; }
body {
  margin: 0;
  min-height: 100vh;
  display: flex;
  flex-direction: column;
  background: #fff;
  color: #333;
  font: 18px/26px "Noto Sans", "Open Sans", sans-serif;
}
button { border: 0; padding: 0; background: none; color: inherit; font: inherit; display: flex; align-items: center; justify-content: center; }
h1, h2 { margin: 0; font-weight: 400; }
ul, ol { margin: 0; padding: 0; list-style: none; }
svg { display: block; flex: none; }
.defs { position: absolute; width: 0; height: 0; }
.arrow { width: 0; height: 0; border: 4px solid transparent; border-top: 7px solid #777; border-bottom: 0; flex: none; }

.titlebar { height: 33px; display: flex; align-items: center; background: #f0f2f5; padding-left: 3px; }
.app-logo { width: 22px; height: 26px; }
.logo-f { font: bold 14px "Liberation Sans", sans-serif; fill: #fff; }
.logo-s { font: bold 6px "Liberation Sans", sans-serif; fill: #fff; }
.app-title { font: 18px/26px "Liberation Sans", Arial, sans-serif; color: #111; margin-left: 9px; flex: 1; }
.window-buttons { display: flex; }
.window-buttons button { width: 69px; height: 33px; }
.window-buttons svg { width: 15px; height: 15px; }

.tabbar { height: 47px; display: flex; background: #d9d9d9; padding-right: 17px; }
.quick { width: 316px; display: flex; align-items: center; padding-left: 15px; }
.quick button { width: 41px; justify-content: flex-start; padding-left: 9px; gap: 6px; }
.quick button.with-arrow { width: 58px; }
.quick svg { width: 22px; height: 22px; }
.faded { opacity: .6; }
.doc-tab { flex: 1; margin-top: 6px; background: #f4f4f4; border-radius: 7px 7px 0 0; display: flex; align-items: center; padding-right: 6px; }
.doc-name { flex: 1; display: flex; justify-content: center; align-items: center; gap: 8px; padding: 2px 0 0 6px; font: 18px/26px "Liberation Sans", Arial, sans-serif; }
.doc-name svg { width: 22px; height: 24px; }
.tab-close { width: 18px; height: 41px; }
.tab-close svg { width: 15px; height: 15px; }
.account { display: flex; align-items: center; gap: 5px; padding-left: 9px; }
.account button { width: 36px; height: 36px; }
.account svg { width: 24px; height: 24px; }
.lit { background: #d9ecf6; border: 1px solid #86c4e4; border-radius: 3px; }
.account .lit { background: #d3e3ea; }
.account .avatar { background: #bf26bf; color: #fff; border-radius: 50%; font-size: 17px; }

.ribbon { min-height: 125px; display: flex; background: #f4f4f4; padding-left: 17px; }
.workspace { width: 161px; height: 89px; margin-top: 16px; border: 2px solid #c8c8c8; border-radius: 6px; font-weight: 600; font-size: 17px; gap: 10px; padding-bottom: 3px; }
.ribbon-main { flex: 1; padding-left: 5px; }
.modes { display: flex; gap: 26px; padding-left: 18px; }
.modes a { height: 33px; padding: 3px 20px 0; color: #444; font-size: 18px; text-decoration: none; border-bottom: 5px solid transparent; }
.modes .on { font-weight: 600; font-size: 17px; border-color: #3b3b3b; color: #222; }
.groups { display: flex; padding-top: 2px; }
.group { padding: 0 8px; display: flex; flex-direction: column; align-items: center; background: linear-gradient(#ccc, #ccc) left 4px / 2px 74px no-repeat; height: 83px; }
.group.first { background: none; }
.group.wide { min-width: 152px; }
.group.narrow { min-width: 118px; }
.tools { display: flex; height: 57px; }
.tools button { width: 63px; height: 57px; }
.tools .lit { width: 57px; }
.tools svg { width: 48px; height: 48px; }
.group-label { font-size: 17px; height: 26px; gap: 4px; color: #444; }
.fx { font: italic 46px/48px "Liberation Serif", serif; color: #555; }

.viewport { flex: 1; position: relative; overflow: hidden; background: #fff; }
.scene { position: absolute; inset: 0; width: 100%; height: 100%; }
.side { position: absolute; left: 6px; top: 6px; bottom: 6px; width: 439px; display: flex; flex-direction: column; justify-content: space-between; }
.panel-head { height: 36px; display: flex; align-items: center; background: #f4f4f4; border: 1px solid #ddd; border-bottom: 2px solid #ddd; padding: 2px 15px 0 7px; }
.panel-head h2 { flex: 1; font-size: 17px; margin-left: 17px; }
.panel-head svg, .blank { width: 16px; height: 16px; }
.tree { padding: 8px 0 0 15px; }
.tree li { height: 35px; display: flex; align-items: flex-start; padding-left: 36px; }
.tree .root { padding-left: 0; }
.twist { width: 16px; height: 29px; margin-right: 12px; }
.root .twist { margin: 0 13px 0 9px; }
.cell { height: 29px; display: flex; align-items: center; background: #f4f4f4; padding-left: 5px; }
.tree .cell svg { width: 24px; height: 24px; margin-right: 12px; }
.cell > span { padding: 0 19px 0 8px; font-size: 17px; }
.cell b { font-size: 17px; font-weight: 600; color: #222; padding: 0 14px 0 8px; }
.cell.chosen { background: #d9d9d9; }
.root .watch svg { margin-right: 7px; }
.badges { padding-right: 10px; }
.badges input { appearance: none; width: 20px; height: 20px; margin: 0 0 0 3px; border: 2px solid #888; border-radius: 50%; background: radial-gradient(circle, #333 0 4px, #ccd5e8 5px); }

.navbar { position: absolute; left: 43%; bottom: 9px; height: 35px; display: flex; align-items: center; gap: 9px; background: #f4f4f4; padding: 0 4px 0 2px; }
.navbar button { width: 24px; height: 24px; margin: 0 2px; }
.navbar svg { width: 24px; height: 24px; }
.navbar .arrow { margin-left: -5px; }

.cube { position: absolute; right: 0; top: 0; width: 120px; height: 120px; }
.cube-text { font: bold 10px "Liberation Sans", sans-serif; fill: #333b48; }
.axis { font: 14px "Liberation Sans", sans-serif; }
.axis.z { fill: #00f; }
.axis.x { fill: #f00; }
.cube-menu { position: absolute; right: 8px; top: 98px; width: 16px; height: 16px; }
.assistant { position: absolute; right: 5px; top: 123px; width: 32px; height: 316px; background: #f4f4f4; flex-direction: column; justify-content: space-between; padding: 8px 0 18px; }
.assistant svg { width: 16px; height: 16px; }
.assistant span { writing-mode: vertical-rl; rotate: 180deg; font-size: 17px; }

.timeline { height: 73px; display: flex; align-items: flex-start; background: #f4f4f4; padding: 14px 19px 0 8px; }
.playback { display: flex; padding-top: 9px; }
.playback button { width: 36px; height: 24px; }
.playback svg { width: 24px; height: 24px; }
.features { display: flex; margin-left: 20px; }
.features li { width: 35px; height: 46px; padding-top: 8px; border-bottom: 3px solid #c4c4c4; display: flex; justify-content: center; background: linear-gradient(#c4c4c4, #c4c4c4) 18px 100% / 3px 8px no-repeat; }
.features li:first-child { background-position: 17px 100%; border-image: linear-gradient(90deg, transparent 50%, #c4c4c4 50%) 1; border-width: 0 0 3px; }
.features li:last-child { border-image: linear-gradient(90deg, #c4c4c4 60%, transparent 60%) 1; border-width: 0 0 3px; }
.features svg { width: 24px; height: 24px; }
.features li:last-child svg { width: 21px; height: 24px; }
.marker { width: 18px; height: 48px; margin-left: -8px; }
.settings { margin: 9px 0 0 auto; }
.settings svg { width: 24px; height: 24px; }
```
FILE: viewport.js
```js
// Draws the ground grid and the three coil bodies of the isometric view.
(function () {
  var NS = "http://www.w3.org/2000/svg";
  var grid = document.getElementById("grid");
  var bodies = document.getElementById("bodies");
  var OX = 1010, OY = 1134, STEP_X = 35.865, STEP_Y = 20.71;
  var TOP = 37, LEFT = 31, FAR = 46;

  function node(parent, name, attrs) {
    var el = document.createElementNS(NS, name);
    for (var key in attrs) el.setAttribute(key, attrs[key]);
    parent.appendChild(el);
    return el;
  }

  // a runs along the green axis, b along the red one (up and to the left)
  function point(a, b) {
    return (OX + (a - b) * STEP_X).toFixed(1) + " " + (OY - (a + b) * STEP_Y).toFixed(1);
  }

  var minor = "", major = "", line, i;
  for (i = -FAR; i <= TOP; i++) {
    line = "M" + point(i, LEFT) + "L" + point(i, -FAR);
    if (i % 5) minor += line; else major += line;
  }
  for (i = -FAR; i <= LEFT; i++) {
    line = "M" + point(TOP, i) + "L" + point(-FAR, i);
    if (i % 5) minor += line; else major += line;
  }
  node(grid, "path", { d: minor, stroke: "#ededed", "stroke-width": 1.4 });
  node(grid, "path", { d: major, stroke: "#cbcbcb", "stroke-width": 1.3 });
  node(grid, "path", { d: "M" + point(TOP, -FAR) + "L" + point(TOP, LEFT) + "L" + point(-FAR, LEFT), stroke: "#777", "stroke-width": 1.5 });

  var R = 101.3, SIN = 0.577, COS = 0.8165, D = Math.PI / 180;

  function spot(r, t, pitch) {
    var f = (45 - t) * D;
    return [r * Math.cos(f), pitch * t / 360 - r * SIN * Math.sin(f)];
  }
  function str(p) { return p[0].toFixed(1) + " " + p[1].toFixed(1); }

  // brightness by the cosine between surface normal and light
  var ramp = [[-1, 40], [0.3, 48], [0.5, 66], [0.72, 106], [0.86, 110], [0.9, 106], [0.95, 124], [1, 144]];
  function tone(v) {
    for (var k = 1; k < ramp.length; k++) {
      if (v <= ramp[k][0]) {
        var p = ramp[k - 1], q = ramp[k];
        return p[1] + (q[1] - p[1]) * (v - p[0]) / (q[0] - p[0]);
      }
    }
    return 144;
  }

  function shade(r, t, pitch, ao) {
    var f = (45 - t) * D, c = pitch / COS / (2 * Math.PI);
    var len = Math.sqrt(c * c + r * r);
    var ny = -c * Math.cos(f) / len, nz = r / len;
    var back = -COS * ny + SIN * nz < 0;
    var b = tone(-0.434 * ny + 0.902 * nz) * (back ? 0.85 : 1) * ao(r, t);
    var nx = c * Math.sin(f) / len;
    var s = Math.pow(Math.max(0, -0.646 * ny + 0.764 * nz), 120) * 90 * (Math.abs(nx) < 0.4 ? 1 : 0.3);
    var warm = 2.6 + 2 * Math.cos(f);
    return "rgb(" + [b + s + warm, b + s, b + s - warm * 2.5].map(function (v) { return Math.max(0, Math.min(255, Math.round(v))); }).join() + ")";
  }

  function rim(g, from, to, pitch) {
    var pts = [];
    for (var t = from; t <= to; t += 3) pts.push(str(spot(R, t, pitch)));
    node(g, "path", { d: "M" + pts.join("L"), fill: "none", stroke: "#0c0c0c", "stroke-width": 1.8 });
  }

  function turn(id, pitch, rings, ao) {
    var g = node(bodies, "g", { id: id });
    function slab(t) {
      for (var k = 0; k < rings.length - 1; k++) {
        var col = shade((rings[k] + rings[k + 1]) / 2, t + 2.5, pitch, ao);
        node(g, "path", {
          d: "M" + [spot(rings[k], t, pitch), spot(rings[k + 1], t, pitch), spot(rings[k + 1], t + 5, pitch), spot(rings[k], t + 5, pitch)].map(str).join("L") + "Z",
          fill: col, stroke: col, "stroke-width": 0.9
        });
      }
    }
    var t;
    for (t = 355; t >= 135; t -= 5) slab(t);
    rim(g, 135, 360, pitch);
    for (t = 0; t < 135; t += 5) slab(t);
    rim(g, 0, 135, pitch);
    node(g, "path", { d: "M0 0V" + (pitch * 0.37), stroke: "#0c0c0c", "stroke-width": 1.8 });
    return g;
  }

  var full = [0, 1, 2, 4, 6, 9, 12, 15, 18, 21, 24, 27, 30, 34, 38, 43, 48, 54, 61, 69, 78, 88, 96, R];
  var outer = [40, 50, 58, 66, 73, 80, 86, 92, 97, R];

  // looks: one occlusion function per turn from the top; the last repeats
  function coil(name, x, y, pitch, turns, lower, looks) {
    var defs = node(bodies, "defs", {});
    looks.forEach(function (ao, k) {
      defs.appendChild(turn(name + k, pitch, k ? lower : full, ao));
    });
    for (var k = turns - 1; k >= 0; k--) {
      node(bodies, "use", { href: "#" + name + Math.min(k, looks.length - 1), x: x, y: y + k * pitch });
    }
    node(bodies, "path", { d: "M" + x + " " + y + "l71.6 -41.4", stroke: "#0c0c0c", "stroke-width": 1.8 });
  }

  function band(level, drop) {
    return function (r, t) {
      var edge = Math.abs(t - 150) / 150;
      return Math.max(0.5, level - drop * Math.min(1, (R - r) / 38) - 0.1 * edge);
    };
  }

  coil("screw", 1010, 613.5, 103.9, 5, full, [
    function (r, t) { return t > 220 ? 1 - 0.22 * (t - 220) / 140 : 1; },
    function (r, t) {
      if (t < 90) return 0.68 + 0.3 * t / 90;
      return t > 200 ? 0.98 - 0.32 * (t - 200) / 160 : 0.98;
    }
  ]);
  coil("worm", 1230, 485.3, 25.98, 20, outer, [
    function () { return 1; }, band(0.98, 0.05), band(0.88, 0.16), band(0.81, 0.24), band(0.77, 0.26)
  ]);
  coil("disc", 1492.5, 827.4, 5.2, 5, outer, [
    function () { return 1; }, function () { return 0.85; }
  ]);
})();
```
